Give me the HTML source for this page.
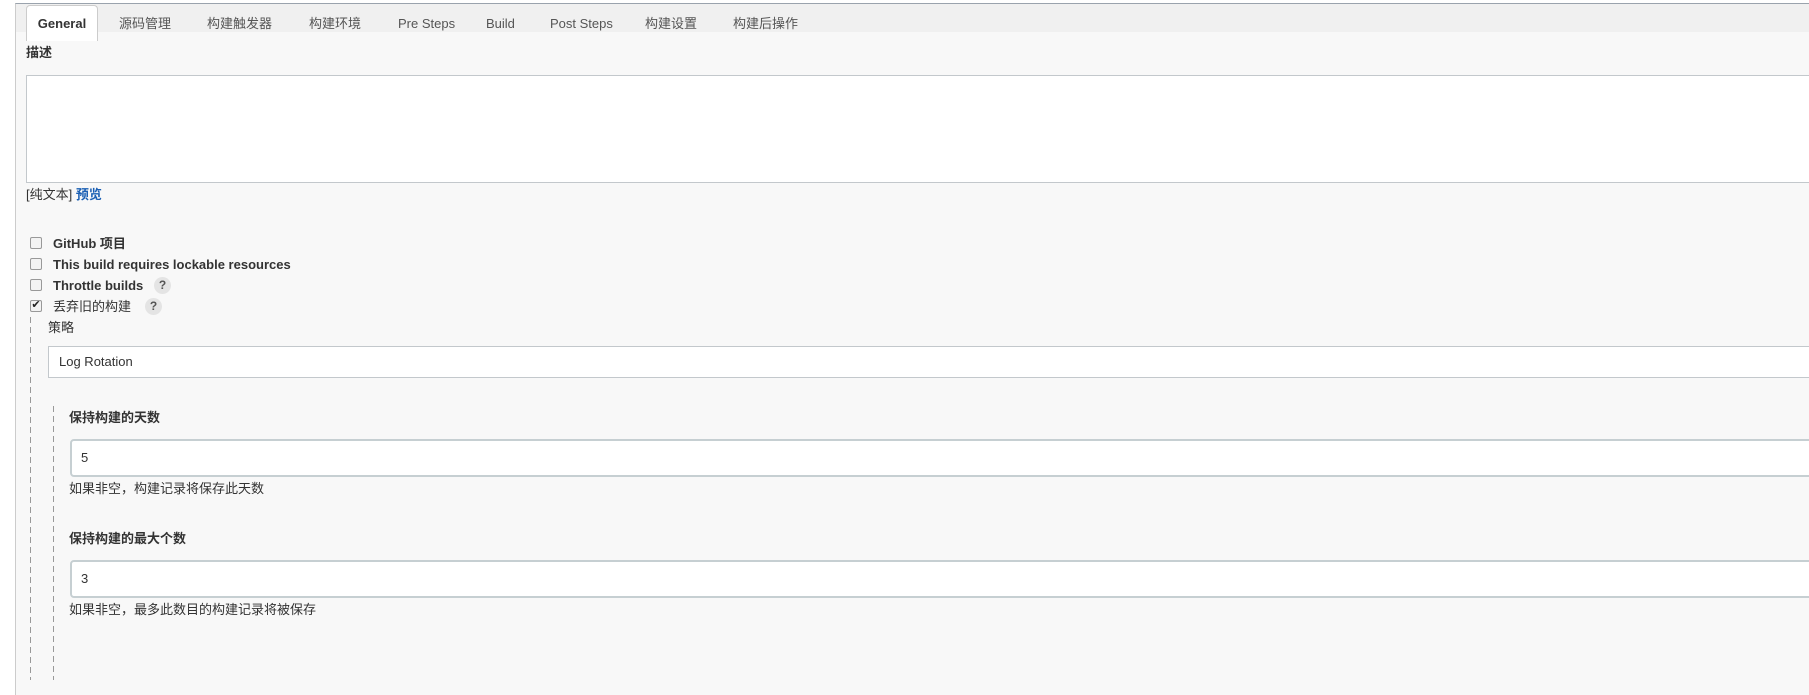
<!DOCTYPE html>
<html><head><meta charset="utf-8"><style>
*{box-sizing:border-box;margin:0;padding:0}
body{width:1809px;height:695px;overflow:hidden;background:#fff;font-family:"Liberation Sans","Noto Sans CJK SC",sans-serif;font-size:13px;color:#333;position:relative}
.a{position:absolute;white-space:nowrap;line-height:16px}
#main{position:absolute;left:15px;top:3px;right:0;bottom:0;background:#f8f8f8;border-left:1px solid #ccc;border-top:1px solid #9aa3ad}
#bar{position:absolute;left:16px;top:4px;right:0;height:28px;background:#f0f0f0}
.tab{position:absolute;top:16px;color:#555;font-size:13px}
#gen{position:absolute;left:26px;top:5px;width:72px;height:36px;background:#fff;border:1px solid #ccc;border-bottom:none;border-radius:4px 4px 0 0;font-weight:bold;color:#333;text-align:center;line-height:36px}
.box{position:absolute;background:#fff;border:1px solid #c3c8cc}
.cb{position:absolute;left:30px;width:12px;height:12px;border:1px solid #999;border-radius:2px;background:#f3f3f3}
.lbl{position:absolute;left:53px;font-weight:600;color:#333}
.q{position:absolute;width:17px;height:17px;border-radius:50%;background:#e4e4e4;color:#555;font-size:12px;text-align:center;line-height:17px;font-weight:bold}
.dash{position:absolute;width:1px;background:repeating-linear-gradient(to bottom,#999 0 6px,transparent 6px 10px)}
.inp{position:absolute;left:70px;right:-10px;height:38px;background:#fff;border:2px solid #c6cfd2;border-radius:4px;padding-left:9px;line-height:34px}
</style></head><body>
<div id="main"></div>
<div id="bar"></div>
<div id="gen">General</div>
<div class="tab a" style="left:119px">源码管理</div>
<div class="tab a" style="left:207px">构建触发器</div>
<div class="tab a" style="left:309px">构建环境</div>
<div class="tab a" style="left:398px">Pre Steps</div>
<div class="tab a" style="left:486px">Build</div>
<div class="tab a" style="left:550px">Post Steps</div>
<div class="tab a" style="left:645px">构建设置</div>
<div class="tab a" style="left:733px">构建后操作</div>
<div class="a" style="left:26px;top:45px;font-weight:bold">描述</div>
<div class="box" style="left:26px;top:75px;right:-5px;height:108px"></div>
<div class="a" style="left:26px;top:187px">[纯文本] <span style="color:#1a5fb4;font-weight:bold">预览</span></div>
<div class="cb" style="top:237px"></div><div class="lbl a" style="top:236px">GitHub 项目</div>
<div class="cb" style="top:258px"></div><div class="lbl a" style="top:257px">This build requires lockable resources</div>
<div class="cb" style="top:279px"></div><div class="lbl a" style="top:278px">Throttle builds</div><div class="q" style="left:154px;top:277px">?</div>
<div class="cb" style="top:300px;text-align:center;line-height:9px;font-size:11px;color:#222">✔</div><div class="lbl a" style="top:299px;font-weight:normal">丢弃旧的构建</div><div class="q" style="left:145px;top:298px">?</div>
<div class="dash" style="left:30px;top:317px;height:363px"></div>
<div class="a" style="left:48px;top:320px">策略</div>
<div class="box" style="left:48px;top:346px;right:-5px;height:32px;padding-left:10px;line-height:30px;color:#333">Log Rotation</div>
<div class="dash" style="left:53px;top:406px;height:274px"></div>
<div class="a" style="left:69px;top:410px;font-weight:bold">保持构建的天数</div>
<div class="inp" style="top:439px">5</div>
<div class="a" style="left:69px;top:481px">如果非空，构建记录将保存此天数</div>
<div class="a" style="left:69px;top:531px;font-weight:bold">保持构建的最大个数</div>
<div class="inp" style="top:560px">3</div>
<div class="a" style="left:69px;top:602px">如果非空，最多此数目的构建记录将被保存</div>
</body></html>
